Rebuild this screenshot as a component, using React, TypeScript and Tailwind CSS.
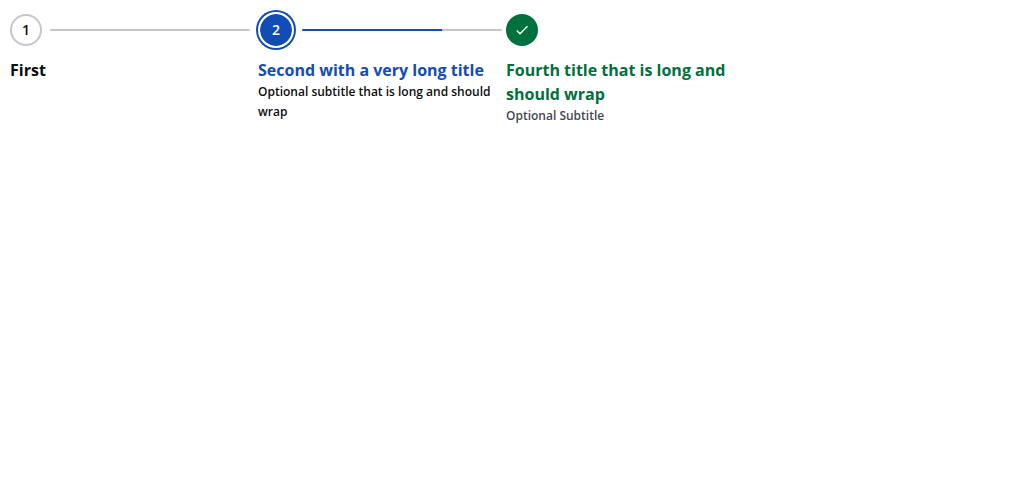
type Step = {
  title: string;
  subtitle?: string;
  kind: "pending" | "current" | "done";
  progress?: number;
};

const steps: Step[] = [
  { title: "First", kind: "pending", progress: 0 },
  {
    title: "Second with a very long title",
    subtitle: "Optional subtitle that is long and should wrap",
    kind: "current",
    progress: 70,
  },
  {
    title: "Fourth title that is long and should wrap",
    subtitle: "Optional Subtitle",
    kind: "done",
  },
];

const markerStyle = {
  pending: "size-8 border-2 border-[#c3c6cb] bg-white text-[#0b0d0f]",
  current: "size-9 border-2 border-white bg-[#124db5] bg-clip-padding text-white ring-2 ring-[#124db5]",
  done: "size-8 bg-[#00703c] text-white",
};

const titleColor = {
  pending: "text-[#0b0d0f]",
  current: "text-[#124db5]",
  done: "text-[#00703c]",
};

const subtitleColor = {
  pending: "text-[#414853]",
  current: "text-[#0b0d0f]",
  done: "text-[#414853]",
};

function Marker({ kind, number }: { kind: Step["kind"]; number: number }) {
  return (
    <span
      className={`flex shrink-0 items-center justify-center rounded-full text-sm font-semibold ${markerStyle[kind]}`}
    >
      {kind === "done" ? (
        <svg className="size-4" viewBox="0 0 24 24" fill="currentColor" aria-hidden="true">
          <path d="M9 16.17 4.83 12l-1.42 1.41L9 19 21 7l-1.41-1.41z" />
        </svg>
      ) : (
        number
      )}
    </span>
  );
}

export default function App() {
  return (
    <ol className="flex items-start gap-1 px-2.5 py-3.5 font-['Open_Sans',sans-serif]">
      {steps.map((step, i) => (
        <li
          key={step.title}
          className="w-61 min-w-0"
          aria-current={step.kind === "current" ? "step" : undefined}
        >
          <div className="flex h-8 items-center gap-2">
            <Marker kind={step.kind} number={i + 1} />
            {step.progress !== undefined && (
              <div className="h-0.5 w-50 overflow-hidden rounded-full bg-[#c3c6cb]">
                <div className="h-full bg-[#124db5]" style={{ width: `${step.progress}%` }} />
              </div>
            )}
          </div>
          <h3 className={`mt-3 text-base leading-6 font-bold ${titleColor[step.kind]}`}>
            {step.title}
          </h3>
          {step.subtitle && (
            <p className={`text-xs leading-5 font-semibold ${subtitleColor[step.kind]}`}>
              {step.subtitle}
            </p>
          )}
        </li>
      ))}
    </ol>
  );
}
